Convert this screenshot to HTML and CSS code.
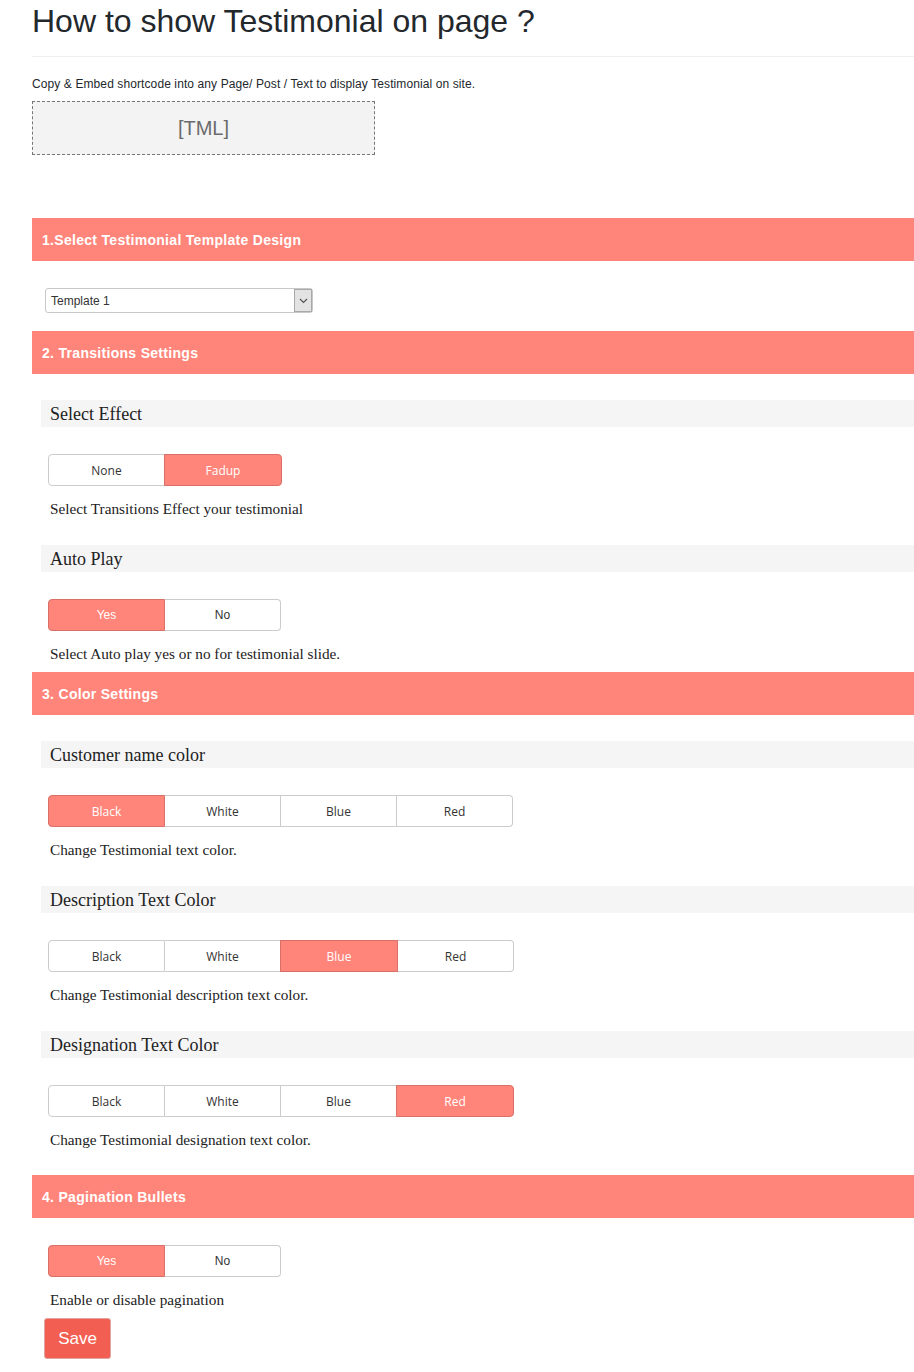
FILE: index.html
```html
<!DOCTYPE html>
<html>
<head>
<meta charset="utf-8">
<link rel="stylesheet" href="styles.css">
</head>
<body>
<div class="wrap">
  <h1 class="title">How to show Testimonial on page ?</h1>
  <div class="rule"></div>
  <p class="copy">Copy &amp; Embed shortcode into any Page/ Post / Text to display Testimonial on site.</p>
  <div class="shortcode">[TML]</div>

  <div class="bar bar-first">1.Select Testimonial Template Design</div>
  <div class="select-row">
    <div class="select">
      <span class="select-text">Template 1</span>
      <span class="select-btn"><svg width="9" height="6" viewBox="0 0 9 6"><path d="M1 1 L4.5 4.5 L8 1" fill="none" stroke="#555" stroke-width="1.2"/></svg></span>
    </div>
  </div>

  <div class="bar bar-s">2. Transitions Settings</div>
  <div class="band">Select Effect</div>
  <div class="group os">
    <span class="btn">None</span><span class="btn on">Fadup</span>
  </div>
  <p class="desc">Select Transitions Effect your testimonial</p>
  <div class="band">Auto Play</div>
  <div class="group ar">
    <span class="btn on">Yes</span><span class="btn">No</span>
  </div>
  <p class="desc desc-last">Select Auto play yes or no for testimonial slide.</p>

  <div class="bar bar-c">3. Color Settings</div>
  <div class="band">Customer name color</div>
  <div class="group os">
    <span class="btn on">Black</span><span class="btn">White</span><span class="btn">Blue</span><span class="btn">Red</span>
  </div>
  <p class="desc">Change Testimonial text color.</p>
  <div class="band">Description Text Color</div>
  <div class="group os">
    <span class="btn">Black</span><span class="btn">White</span><span class="btn on">Blue</span><span class="btn">Red</span>
  </div>
  <p class="desc">Change Testimonial description text color.</p>
  <div class="band">Designation Text Color</div>
  <div class="group os">
    <span class="btn">Black</span><span class="btn">White</span><span class="btn">Blue</span><span class="btn on">Red</span>
  </div>
  <p class="desc">Change Testimonial designation text color.</p>

  <div class="bar bar-p">4. Pagination Bullets</div>
  <div class="group ar group-first">
    <span class="btn on">Yes</span><span class="btn">No</span>
  </div>
  <p class="desc desc-save">Enable or disable pagination</p>
  <button class="save">Save</button>
</div>
</body>
</html>
```
FILE: styles.css
```css
html, body {
  margin: 0;
  padding: 0;
  background: #fff;
  overflow: hidden;
}
body {
  font-family: "Liberation Sans", Arial, sans-serif;
  color: #23282d;
}
.wrap {
  margin-left: 32px;
  width: 882px;
}
.title {
  margin: 0;
  padding-top: 3px;
  font-size: 32px;
  font-weight: 400;
  line-height: 36px;
  color: #23282d;
}
.rule {
  margin-top: 17px;
  height: 1px;
  background: #eee;
}
.copy {
  margin: 20px 0 0 0;
  font-size: 12px;
  line-height: 14px;
  letter-spacing: 0.1px;
  color: #23282d;
}
.shortcode {
  margin-top: 10px;
  width: 341px;
  height: 52px;
  border: 1px dashed #777;
  background: #f3f3f3;
  display: flex;
  align-items: center;
  justify-content: center;
  font-size: 20px;
  color: #6b6b6b;
}
.bar {
  height: 43px;
  background: #ff857a;
  color: #fff;
  font-weight: 700;
  font-size: 14px;
  letter-spacing: 0.3px;
  padding-left: 10px;
  display: flex;
  align-items: center;
}
.bar-first { margin-top: 63px; }
.bar-s { margin-top: 18px; }
.bar-c { margin-top: 8px; }
.bar-p { margin-top: 25px; }
.select-row {
  padding: 27px 0 0 13px;
}
.select {
  width: 266px;
  height: 23px;
  border: 1px solid #c8c8c8;
  border-radius: 3px;
  display: flex;
  align-items: center;
  justify-content: space-between;
  background: #fff;
}
.select-text {
  padding-left: 5px;
  font-size: 12px;
  color: #333;
}
.select-btn {
  width: 16px;
  height: 21px;
  border: 1px solid #a9a9a9;
  background: #e3e3e3;
  display: flex;
  align-items: center;
  justify-content: center;
}
.band {
  margin: 26px 0 0 9px;
  height: 27px;
  box-sizing: border-box;
  padding: 2px 0 0 9px;
  background: #f5f5f5;
  font-family: "Liberation Serif", "Times New Roman", serif;
  font-size: 18px;
  color: #222;
  display: flex;
  align-items: center;
}
.desc + .band { margin-top: 26px; }
.group {
  margin: 27px 0 0 16px;
  display: flex;
}
.group-first { margin-top: 27px; }
.btn {
  width: 115px;
  height: 30px;
  border: 1px solid #ccc;
  border-left-width: 0;
  background: #fff;
  display: flex;
  align-items: center;
  justify-content: center;
  font-size: 12px;
  color: #333;
}
.os .btn { font-family: "Open Sans", "Noto Sans", sans-serif; }
.ar .btn { font-family: "Liberation Sans", Arial, sans-serif; }
.btn:first-child {
  border-left-width: 1px;
  border-radius: 4px 0 0 4px;
}
.btn:last-child { border-radius: 0 4px 4px 0; }
.btn.on {
  background: #ff857a;
  border-color: #d87067;
  border-left-width: 1px;
  color: #fff;
}
.btn.on + .btn { border-left-width: 0; }
.btn.on:not(:first-child) { margin-left: -1px; width: 116px; }
.desc {
  margin: 13px 0 0 18px;
  font-family: "Liberation Serif", "Times New Roman", serif;
  font-size: 15.25px;
  line-height: 20px;
  color: #222;
}
.desc-save { margin-bottom: 0; }
.save {
  display: block;
  margin: 8px 0 0 12px;
  width: 67px;
  height: 41px;
  border: 1px solid #e0a49e;
  border-radius: 3px;
  background: #f25f52;
  color: #fff;
  font-family: "Liberation Sans", Arial, sans-serif;
  font-size: 17px;
  padding: 0;
}
```
